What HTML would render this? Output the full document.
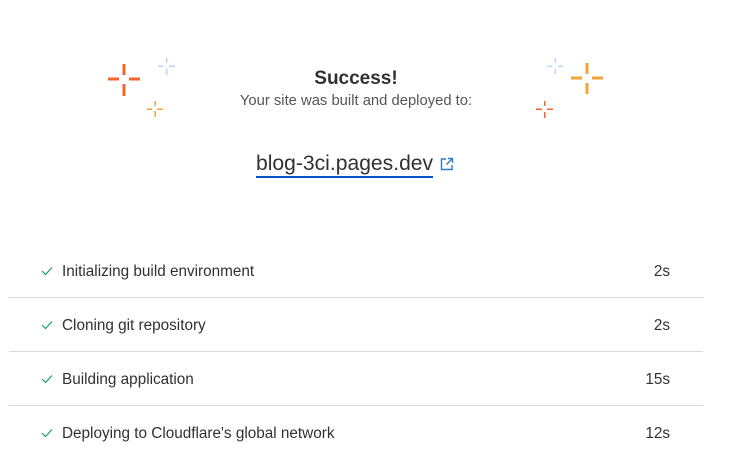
<!DOCTYPE html>
<html><head><style>
body{margin:0;width:730px;height:458px;background:#fff;font-family:"Liberation Sans",sans-serif;color:#313131;position:relative;overflow:hidden}
.a{position:absolute}
.row{position:absolute;left:9px;width:694px;height:54px;font-size:15.3px}
.row .t{position:absolute;left:53px;top:5px}
.row .s{position:absolute;right:33px;top:5px}
.row .c{position:absolute;left:32px;top:8px}
.line{position:absolute;left:9px;width:694px;height:1px;background:#d9d9d9}
</style></head><body>
<svg class="a" style="left:0;top:0" width="730" height="130">
<g fill="#f6642d"><rect x="108" y="77.5" width="11" height="3"/><rect x="129" y="77.5" width="11" height="3"/><rect x="122.5" y="64" width="3" height="11"/><rect x="122.5" y="84" width="3" height="12"/></g>
<g fill="#bcd4fb"><rect x="158" y="65.5" width="5" height="1.5"/><rect x="169" y="65.5" width="6" height="1.5"/><rect x="166" y="58" width="1.5" height="5"/><rect x="166" y="69" width="1.5" height="6"/></g>
<g fill="#f6a23a"><rect x="147" y="108.5" width="5" height="1.5"/><rect x="157" y="108.5" width="6" height="1.5"/><rect x="154.5" y="101" width="1.5" height="5"/><rect x="154.5" y="111" width="1.5" height="6"/></g>
<g fill="#bcd4fb"><rect x="547" y="65.5" width="5" height="1.5"/><rect x="558" y="65.5" width="5" height="1.5"/><rect x="554.5" y="58" width="1.5" height="5"/><rect x="554.5" y="69" width="1.5" height="5"/></g>
<g fill="#f6a23a"><rect x="571" y="76.5" width="11" height="3"/><rect x="592" y="76.5" width="11" height="3"/><rect x="585.5" y="63" width="3" height="11"/><rect x="585.5" y="83" width="3" height="11"/></g>
<g fill="#f6642d"><rect x="536" y="108.5" width="6" height="1.5"/><rect x="547" y="108.5" width="6" height="1.5"/><rect x="544" y="101" width="1.5" height="5"/><rect x="544" y="112" width="1.5" height="6"/></g>
</svg>
<div class="a" style="left:0;width:712px;top:68px;text-align:center;font-weight:bold;font-size:19px">Success!</div>
<div class="a" style="left:0;width:712px;top:93px;text-align:center;font-size:14.8px;color:#555">Your site was built and deployed to:</div>
<div class="a" style="left:256px;top:152px;font-size:21.1px;color:#313131;border-bottom:2px solid #0051c3;line-height:24px">blog-3ci.pages.dev</div>
<svg class="a" style="left:440px;top:157px" width="14" height="14" fill="none" stroke="#2c7cd4" stroke-width="1.4"><path d="M6 2H1.5v10.5H12V8"/><path d="M8 1.5h4.5V6M12.5 1.5 6.5 7.5"/></svg>
<div class="row" style="top:258px"><svg class="c" width="12" height="10"><path d="M1 5l3.5 3.5L11 1.5" fill="none" stroke="#1f9e5a" stroke-width="1.2"/></svg><span class="t">Initializing build environment</span><span class="s">2s</span></div>
<div class="line" style="top:297px"></div>
<div class="row" style="top:312px"><svg class="c" width="12" height="10"><path d="M1 5l3.5 3.5L11 1.5" fill="none" stroke="#1f9e5a" stroke-width="1.2"/></svg><span class="t">Cloning git repository</span><span class="s">2s</span></div>
<div class="line" style="top:351px"></div>
<div class="row" style="top:366px"><svg class="c" width="12" height="10"><path d="M1 5l3.5 3.5L11 1.5" fill="none" stroke="#1f9e5a" stroke-width="1.2"/></svg><span class="t">Building application</span><span class="s">15s</span></div>
<div class="line" style="top:405px"></div>
<div class="row" style="top:420px"><svg class="c" width="12" height="10"><path d="M1 5l3.5 3.5L11 1.5" fill="none" stroke="#1f9e5a" stroke-width="1.2"/></svg><span class="t">Deploying to Cloudflare's global network</span><span class="s">12s</span></div>
</body></html>
